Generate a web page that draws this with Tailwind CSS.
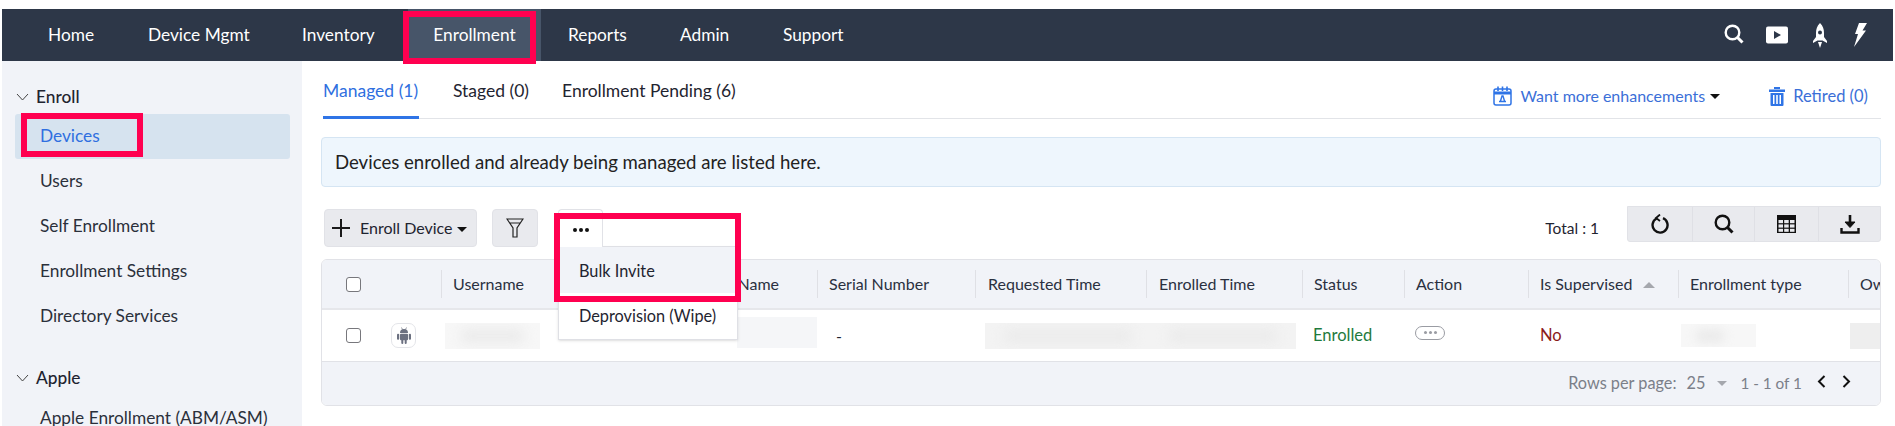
<!DOCTYPE html>
<html>
<head>
<meta charset="utf-8">
<script src="https://cdn.jsdelivr.net/npm/@tailwindcss/browser@4"></script>
</head>
<body class="bg-white">
<div class="h-[426px] w-[1895px] overflow-hidden pt-[9px] px-[2px] font-[Lato,sans-serif] text-[#1f2430]">
  <!-- nav -->
  <header class="h-[52px] bg-[#2d3748] flex items-center text-white text-[17.3px]">
    <nav class="flex items-center h-full pl-[46px]">
      <a class="w-[100px]">Home</a>
      <a class="w-[154px]">Device Mgmt</a>
      <a class="w-[106px]">Inventory</a>
      <div class="relative h-full w-[133px] bg-[#475569] flex items-center justify-center">
        <span>Enrollment</span>
        <div class="absolute left-[-5px] top-[2px] w-[133px] h-[53px] border-[6px] border-[#ff0050]"></div>
      </div>
      <a class="ml-[27px] w-[112px]">Reports</a>
      <a class="w-[103px]">Admin</a>
      <a>Support</a>
    </nav>
    <div class="ml-auto flex items-center gap-[22px] pr-[26px]">
      <svg width="20" height="20" viewBox="0 0 20 20" fill="none" stroke="white" class="mt-[-3px]"><circle cx="8.5" cy="8.5" r="6.8" stroke-width="2.4"/><path d="M13.5 13.5 L18.5 18.5" stroke-width="3"/></svg>
      <svg width="22" height="18" viewBox="0 0 22 18"><rect width="22" height="17" y="0.5" rx="2" fill="white"/><path d="M8 5 L15 9 L8 13Z" fill="#2d3748"/></svg>
      <svg width="14" height="25" viewBox="0 0 14 25" class="ml-[3px]"><path d="M7 0 C10 3 11 6 11 10 L11 14 L14 18 L14 20 L9.5 17.5 L4.5 17.5 L0 20 L0 18 L3 14 L3 10 C3 6 4 3 7 0Z" fill="white"/><circle cx="7" cy="9.5" r="2" fill="#2d3748"/><path d="M5 19 H9 L7 25Z" fill="white"/></svg>
      <svg width="14" height="24" viewBox="0 0 14 24" class="ml-[4px]"><path d="M6 0 H14 L9.5 7.5 H13 L1 24 L5 11 H2Z" fill="white"/></svg>
    </div>
  </header>

  <div class="flex h-[365px]">
    <!-- sidebar -->
    <aside class="w-[300px] shrink-0 bg-[#f1f3f8] text-[17.3px] text-[#2b303b] pt-[24px] pl-[13px] pr-[12px]">
      <div class="flex items-center h-[24px] gap-[7px] pl-[1px] font-medium text-[#1f2430]">
        <svg width="13" height="8" viewBox="0 0 13 8" fill="none" stroke="#444"><path d="M1 1 L6.5 7 L12 1"/></svg>
        <span>Enroll</span>
      </div>
      <div class="relative mt-[5px] h-[45px] rounded-[3px] bg-[#d6e3ef] flex items-center pl-[25px] pb-[2px] text-[#2f6fe0]">
        <span>Devices</span>
        <div class="absolute left-[6px] top-[-1px] w-[122px] h-[44px] border-[6px] border-[#ff0050]"></div>
      </div>
      <div class="flex flex-col pl-[25px]">
        <a class="h-[45px] leading-[43px]">Users</a>
        <a class="h-[45px] leading-[43px]">Self Enrollment</a>
        <a class="h-[45px] leading-[43px]">Enrollment Settings</a>
        <a class="h-[45px] leading-[43px]">Directory Services</a>
      </div>
      <div class="flex items-center h-[24px] gap-[7px] pl-[1px] mt-[27px] font-medium text-[#1f2430]">
        <svg width="13" height="8" viewBox="0 0 13 8" fill="none" stroke="#444"><path d="M1 1 L6.5 7 L12 1"/></svg>
        <span>Apple</span>
      </div>
      <a class="block pl-[25px] mt-[15px]">Apple Enrollment (ABM/ASM)</a>
    </aside>

    <!-- main -->
    <main class="flex-1 pl-[19px] pr-[12px]">
      <div class="ml-[2px] h-[58px] border-b border-[#e2e4e8] flex items-start text-[17.5px] pr-[13px]">
        <div class="h-[58px] w-[96px] border-b-[3px] border-[#2f74e6] text-[#2f6fe0] pt-[17px] whitespace-nowrap">Managed (1)</div>
        <div class="ml-[34px] pt-[17px]">Staged (0)</div>
        <div class="ml-[33px] pt-[17px]">Enrollment Pending (6)</div>
        <div class="ml-auto flex items-center pt-[23px] text-[#3b6fd8] text-[16px]">
          <svg width="19" height="20" viewBox="0 0 19 20" fill="none" stroke="#2f74e6" stroke-width="1.5" class="mr-[8px]"><rect x="1" y="3" width="17" height="16" rx="2"/><path d="M1 7 H18" stroke-width="3"/><path d="M5 0.5 V5 M9.5 0.5 V5 M14 0.5 V5" stroke-width="1.6"/><path d="M6 15.5 H13 M7.5 15 L9 10 H10 L11.5 15" stroke-width="1.4"/></svg>
          <span>Want more enhancements</span>
          <span class="ml-[5px] w-0 h-0 border-x-[5px] border-x-transparent border-t-[5px] border-t-[#111]"></span>
          <svg width="16" height="19" viewBox="0 0 16 19" class="ml-[49px] mr-[8px]" fill="#2f74e6"><rect x="5" y="0" width="6" height="2"/><rect x="0" y="2.5" width="16" height="2.5"/><path d="M1.5 6 H14.5 V18 Q14.5 19 13.5 19 H2.5 Q1.5 19 1.5 18Z M4 8 V17 H5.5 V8Z M7.2 8 V17 H8.8 V8Z M10.5 8 V17 H12 V8Z" fill-rule="evenodd"/></svg>
          <span class="text-[16.5px]">Retired (0)</span>
        </div>
      </div>

      <div class="mt-[18px] h-[50px] rounded-[4px] border border-[#d5e5f3] bg-[#eef6fd] flex items-center pl-[13px] pt-[2px] text-[18.6px] text-[#222]">Devices enrolled and already being managed are listed here.</div>

      <!-- toolbar -->
      <div class="mt-[22px] h-[38px] ml-[3px] flex items-start">
        <button class="h-[38px] w-[153px] rounded-[4px] bg-[#e9eaee] border border-[#e1e2e7] flex items-center pl-[7px] text-[16px]">
          <svg width="18" height="18" viewBox="0 0 18 18" stroke="#1a1a1a" stroke-width="2"><path d="M9 0 V18 M0 9 H18"/></svg>
          <span class="ml-[10px]">Enroll Device</span>
          <span class="ml-[4px] mt-[2px] w-0 h-0 border-x-[5px] border-x-transparent border-t-[5px] border-t-[#111]"></span>
        </button>
        <button class="ml-[15px] h-[38px] w-[46px] rounded-[4px] bg-[#e9eaee] border border-[#e1e2e7] flex items-center justify-center">
          <svg width="18" height="20" viewBox="0 0 18 20" fill="none" stroke="#222" stroke-width="1.2"><path d="M1 1 H17 L11 10 V19 H7 V10Z M4 5 H14"/></svg>
        </button>
        <div class="relative ml-[23px] w-[42px] h-[38px]">
          <div class="absolute left-[-3px] top-0 w-[180px] h-[131px] z-10">
            <div class="h-[38px] flex">
              <div class="w-[45px] h-[38px] bg-white rounded-t-[4px] border border-b-0 border-[#e1e2e7] flex items-center justify-center gap-[2px] pt-[2px]">
                <span class="size-[4px] rounded-full bg-[#111]"></span><span class="size-[4px] rounded-full bg-[#111]"></span><span class="size-[4px] rounded-full bg-[#111]"></span>
              </div>
              <div class="flex-1 border-b border-[#dfe0e5]"></div>
            </div>
            <div class="h-[93px] bg-white border border-t-0 border-[#dfe0e5] text-[16.3px] shadow-sm">
              <div class="h-[46px] bg-[#f1f3f8] flex items-center pl-[20px] pt-[3px]">Bulk Invite</div>
              <div class="h-[46px] flex items-center pl-[20px]">Deprovision (Wipe)</div>
            </div>
          </div>
          <div class="absolute left-[-7px] top-[4px] w-[187px] h-[89px] border-[6px] border-[#ff0050] z-20"></div>
        </div>
        <span class="ml-auto mt-[4px] mr-[28px] text-[15.5px] leading-[30px]">Total : 1</span>
        <div class="mt-[-3px] h-[36px] w-[254px] rounded-b-[3px] bg-[#e9eaee] border border-[#e1e2e7] grid grid-cols-[65px_62px_64px_1fr] divide-x divide-[#dfe0e5]">
          <div class="flex items-center justify-center"><svg width="18" height="20" viewBox="0 0 18 20" fill="none" stroke="#111" stroke-width="2.4"><path d="M5.5 4.5 A7.5 7.5 0 1 0 12 4.2"/><path d="M9 0.5 L5 4 L9 7" stroke-width="1.8"/></svg></div>
          <div class="flex items-center justify-center"><svg width="20" height="20" viewBox="0 0 20 20" fill="none" stroke="#111"><circle cx="8.5" cy="8.5" r="6.8" stroke-width="2.4"/><path d="M13.5 13.5 L18.5 18.5" stroke-width="3"/></svg></div>
          <div class="flex items-center justify-center"><svg width="19" height="18" viewBox="0 0 19 18"><rect width="19" height="18" fill="#111"/><g fill="#e9eaee"><rect x="1.5" y="5" width="4.5" height="3.2"/><rect x="7.2" y="5" width="4.5" height="3.2"/><rect x="13" y="5" width="4.5" height="3.2"/><rect x="1.5" y="9.4" width="4.5" height="3.2"/><rect x="7.2" y="9.4" width="4.5" height="3.2"/><rect x="13" y="9.4" width="4.5" height="3.2"/><rect x="1.5" y="13.8" width="4.5" height="3"/><rect x="7.2" y="13.8" width="4.5" height="3"/><rect x="13" y="13.8" width="4.5" height="3"/></g></svg></div>
          <div class="flex items-center justify-center"><svg width="20" height="19" viewBox="0 0 20 19" fill="none" stroke="#111"><path d="M10 0 V11" stroke-width="2.6"/><path d="M5 7 L10 12.5 L15 7Z" fill="#111" stroke-width="1"/><path d="M1.5 13 V17.5 H18.5 V13" stroke-width="2.4"/></svg></div>
        </div>
      </div>

      <!-- table -->
      <div class="mt-[12px] h-[147px] rounded-[6px] border border-[#e1e2e7] overflow-hidden text-[16px]">
        <div class="h-[50px] bg-[#f1f3f8] border-b-2 border-[#e6e7eb] grid grid-cols-[119px_235px_141px_158px_171px_156px_102px_124px_150px_170px_32px] items-center text-[#2a3040]">
          <div class="pl-[24px] flex items-center"><span class="size-[15px] rounded-[3px] border border-[#77777c] bg-white"></span></div>
          <div class="h-[28px] leading-[28px] border-l border-[#dfe0e5] pl-[11px]">Username</div>
          <div class="h-[28px] leading-[28px] border-l border-[#dfe0e5] pl-[8px]">Device Name</div>
          <div class="h-[28px] leading-[28px] border-l border-[#dfe0e5] pl-[11px]">Serial Number</div>
          <div class="h-[28px] leading-[28px] border-l border-[#dfe0e5] pl-[12px]">Requested Time</div>
          <div class="h-[28px] leading-[28px] border-l border-[#dfe0e5] pl-[12px]">Enrolled Time</div>
          <div class="h-[28px] leading-[28px] border-l border-[#dfe0e5] pl-[11px]">Status</div>
          <div class="h-[28px] leading-[28px] border-l border-[#dfe0e5] pl-[11px]">Action</div>
          <div class="h-[28px] border-l border-[#dfe0e5] pl-[11px] flex items-center">Is Supervised<span class="ml-[11px] mt-[2px] w-0 h-0 border-x-[6px] border-x-transparent border-b-[6px] border-b-[#a5a7ad]"></span></div>
          <div class="h-[28px] leading-[28px] border-l border-[#dfe0e5] pl-[11px]">Enrollment type</div>
          <div class="h-[28px] leading-[28px] border-l border-[#dfe0e5] pl-[11px] overflow-hidden whitespace-nowrap">Owner</div>
        </div>
        <div class="h-[52px] bg-white border-b border-[#e1e2e7] grid grid-cols-[119px_235px_141px_158px_171px_156px_102px_124px_150px_170px_32px] items-center">
          <div class="pl-[24px] flex items-center">
            <span class="size-[15px] rounded-[3px] border border-[#77777c] bg-white"></span>
            <span class="ml-[30px] size-[25px] rounded-[7px] border border-[#e4e5e9] flex items-center justify-center">
              <svg width="14" height="17" viewBox="0 0 14 17" fill="#6b7080"><path d="M3 6 A4 4 0 0 1 11 6Z"/><path d="M4.5 0.5 L5.5 2.5 M9.5 0.5 L8.5 2.5" stroke="#6b7080" stroke-width="0.7"/><rect x="3" y="6.7" width="8" height="6.5" rx="1"/><rect x="0" y="6.7" width="2.2" height="6" rx="1"/><rect x="11.8" y="6.7" width="2.2" height="6" rx="1"/><rect x="4.3" y="12" width="2" height="5" rx="1"/><rect x="7.7" y="12" width="2" height="5" rx="1"/></svg>
            </span>
          </div>
          <div class="pl-[4px] flex items-center">
            <div class="w-[95px] h-[26px] bg-[#f7f7f7] overflow-hidden flex items-center justify-center"><div class="w-[65px] h-[14px] rounded-full bg-[#ebebeb] blur-[6px]"></div></div>
          </div>
          <div class="pl-[61px] flex items-center">
            <div class="w-[80px] h-[31px] mt-[-6px] bg-[#f5f6f8] overflow-hidden"></div>
          </div>
          <div class="pl-[19px]">-</div>
          <div class="col-span-2 pl-[10px] flex items-center">
            <div class="w-[311px] h-[26px] bg-[#f3f3f3] overflow-hidden flex items-center justify-around"><div class="w-[130px] h-[14px] rounded-full bg-[#ebebeb] blur-[6px]"></div><div class="w-[110px] h-[14px] rounded-full bg-[#ebebeb] blur-[6px]"></div></div>
          </div>
          <div class="pl-[11px] text-[#1f7a3d] text-[16.5px]">Enrolled</div>
          <div class="pl-[11px] flex items-center">
            <span class="mt-[-6px] w-[30px] h-[14px] rounded-full border border-[#9a9ca3] flex items-center justify-center gap-[2px]">
              <span class="size-[3px] rounded-full bg-[#9a9ca3]"></span><span class="size-[3px] rounded-full bg-[#9a9ca3]"></span><span class="size-[3px] rounded-full bg-[#9a9ca3]"></span>
            </span>
          </div>
          <div class="pl-[12px] text-[#8b1a1a] text-[16.5px]">No</div>
          <div class="pl-[3px]"><div class="w-[75px] h-[23px] bg-[#f7f7f7] overflow-hidden flex items-center"><div class="ml-[14px] w-[30px] h-[14px] rounded-full bg-[#ebebeb] blur-[5px]"></div></div></div>
          <div class="pl-[2px]"><div class="w-[30px] h-[26px] bg-[#eeeeee]"></div></div>
        </div>
        <div class="h-[43px] bg-[#f1f3f8] flex items-center justify-end pr-[29px] text-[16.3px] text-[#7b7f89]">
          <span>Rows per page:</span>
          <span class="ml-[10px]">25</span>
          <span class="ml-[12px] w-0 h-0 border-x-[5px] border-x-transparent border-t-[5px] border-t-[#a5a7ad]"></span>
          <span class="ml-[13px] text-[15.3px]">1 - 1 of 1</span>
          <svg width="9" height="13" viewBox="0 0 9 13" fill="none" stroke="#111" stroke-width="2" class="ml-[15px] mt-[-4px]"><path d="M7.5 1 L2 6.5 L7.5 12"/></svg>
          <svg width="9" height="13" viewBox="0 0 9 13" fill="none" stroke="#111" stroke-width="2" class="ml-[16px] mt-[-4px]"><path d="M1.5 1 L7 6.5 L1.5 12"/></svg>
        </div>
      </div>
    </main>
  </div>
</div>
</body>
</html>
